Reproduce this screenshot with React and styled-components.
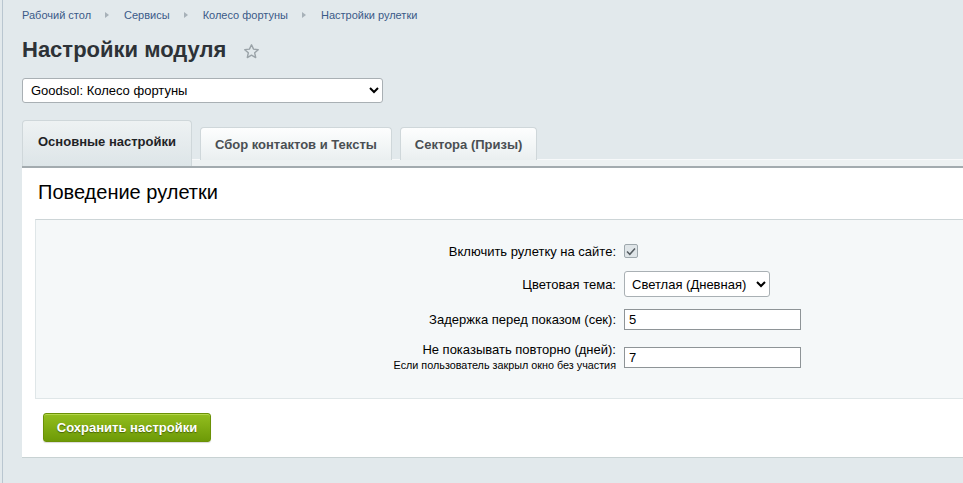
import React from "react";
import styled, { createGlobalStyle } from "styled-components";

const Global = createGlobalStyle`
  html, body { margin: 0; padding: 0; overflow: hidden; }
  body {
    background: #e2e9ec;
    font-family: "Liberation Sans", Arial, sans-serif;
    color: #000;
  }
`;

const Page = styled.div`
  margin-left: 2px;
  border-left: 1px solid #b9c6d0;
  min-height: 483px;
  padding: 8px 0 0 19px;
  width: 1200px;
  box-sizing: border-box;
`;

const Crumbs = styled.nav`
  display: flex;
  align-items: center;
  height: 14px;
  font-size: 11px;
  color: #3a5a88;
`;

const Crumb = styled.span`
  white-space: nowrap;
`;

const Arrow = styled.span`
  width: 0;
  height: 0;
  border-top: 3px solid transparent;
  border-bottom: 3px solid transparent;
  border-left: 4px solid #a7b1b8;
  margin: 0 15px 0 14px;
`;

const TitleRow = styled.div`
  display: flex;
  align-items: center;
  margin-top: 15px;
  height: 26px;
`;

const Title = styled.h1`
  margin: 0;
  font-size: 22px;
  font-weight: bold;
  color: #2d3237;
`;

const Star = styled.svg`
  margin-left: 17px;
  margin-top: 2px;
`;

const ModuleSelect = styled.select`
  display: block;
  margin-top: 15px;
  width: 361px;
  height: 25px;
  border: 1px solid #a9b0b4;
  border-radius: 3px;
  background: #fff;
  font-family: "Liberation Sans", Arial, sans-serif;
  font-size: 13px;
  color: #000;
  padding: 0 4px;
`;

const Tabs = styled.div`
  display: flex;
  align-items: flex-end;
  gap: 8px;
  margin-top: 17px;
  height: 46px;
  border-bottom: 2px solid #a3abaf;
  box-shadow: inset 0 -6px 0 #edf1f2, inset 0 -7px 0 #f7f9fa;
`;

const Tab = styled.div`
  box-sizing: border-box;
  height: ${(p) => (p.$active ? "46px" : "33px")};
  margin-bottom: ${(p) => (p.$active ? "0" : "6px")};
  padding: 0 ${(p) => (p.$active ? "15px" : "14px")};
  padding-bottom: ${(p) => (p.$active ? "4px" : "0")};
  display: flex;
  align-items: center;
  font-size: 13px;
  font-weight: bold;
  color: ${(p) => (p.$active ? "#1f2326" : "#4a4f53")};
  border: 1px solid #cfd7da;
  border-bottom: none;
  border-radius: 4px 4px 0 0;
  background: ${(p) =>
    p.$active
      ? "linear-gradient(#eef2f3, #dde5e8)"
      : "linear-gradient(#fdfefe, #eaeff0)"};
  white-space: nowrap;
`;

const Card = styled.div`
  background: #fff;
  border-bottom: 1px solid #c8d2d3;
  padding: 12px 0 15px 13px;
`;

const SectionTitle = styled.h2`
  margin: 0 0 0 3px;
  font-size: 20px;
  font-weight: normal;
  color: #000;
  height: 25px;
  line-height: 25px;
`;

const FieldBox = styled.div`
  margin-top: 14px;
  background: #f5f8f9;
  border-top: 1px solid #cdd5d7;
  border-left: 1px solid #dfe6e8;
  border-bottom: 1px solid #dfe6e8;
  padding: 20px 0 25px;
  display: flex;
  flex-direction: column;
  gap: 9px;
`;

const Row = styled.div`
  display: grid;
  grid-template-columns: 588px 1fr;
  align-items: center;
  min-height: ${(p) => p.$h || 26}px;
`;

const Label = styled.div`
  text-align: right;
  padding-right: 8px;
  font-size: 13px;
  line-height: 15px;
  color: #000;
`;

const Note = styled.div`
  font-size: 10.8px;
  line-height: 13px;
  margin-top: 2px;
`;

const Check = styled.span`
  box-sizing: border-box;
  width: 14px;
  height: 14px;
  border: 1px solid #9ea8ad;
  border-radius: 2px;
  background: #dfe5e8;
  display: flex;
  align-items: center;
  justify-content: center;
`;

const ThemeSelect = styled.select`
  width: 146px;
  height: 26px;
  border: 1px solid #a9b0b4;
  border-radius: 3px;
  background: #fff;
  font-family: "Liberation Sans", Arial, sans-serif;
  font-size: 13px;
  color: #000;
  padding: 0 3px;
`;

const TextInput = styled.input`
  box-sizing: border-box;
  width: 177px;
  height: 21px;
  border: 1px solid #8e9497;
  border-radius: 0;
  background: #fff;
  font-family: "Liberation Sans", Arial, sans-serif;
  font-size: 13px;
  color: #000;
  padding: 0 4px;
`;

const Footer = styled.div`
  padding: 14px 0 0 8px;
`;

const SaveButton = styled.button`
  height: 29px;
  width: 168px;
  border: 1px solid #6b9106;
  border-radius: 3px;
  background: linear-gradient(#93be1f, #6d9a07);
  box-shadow: inset 0 1px 0 #b3d64a, 0 1px 1px rgba(0, 0, 0, 0.15);
  color: #fff;
  font-family: "Liberation Sans", Arial, sans-serif;
  font-size: 13px;
  font-weight: bold;
  text-shadow: 0 1px 1px rgba(40, 60, 0, 0.6);
  cursor: pointer;
`;

export default function App() {
  const crumbs = ["Рабочий стол", "Сервисы", "Колесо фортуны", "Настройки рулетки"];
  return (
    <Page>
      <Global />
      <Crumbs>
        {crumbs.map((c, i) => (
          <React.Fragment key={c}>
            {i > 0 && <Arrow />}
            <Crumb>{c}</Crumb>
          </React.Fragment>
        ))}
      </Crumbs>
      <TitleRow>
        <Title>Настройки модуля</Title>
        <Star width="17" height="17" viewBox="0 0 24 24" fill="none" stroke="#9aa3a8" strokeWidth="2" strokeLinejoin="round">
          <path d="M12 2.5l2.9 6.2 6.6.7-5 4.5 1.4 6.6L12 17.1l-5.9 3.4 1.4-6.6-5-4.5 6.6-.7z" />
        </Star>
      </TitleRow>
      <ModuleSelect defaultValue="goodsol">
        <option value="goodsol">Goodsol: Колесо фортуны</option>
      </ModuleSelect>
      <Tabs>
        <Tab $active>Основные настройки</Tab>
        <Tab>Сбор контактов и Тексты</Tab>
        <Tab>Сектора (Призы)</Tab>
      </Tabs>
      <Card>
        <SectionTitle>Поведение рулетки</SectionTitle>
        <FieldBox>
          <Row $h={22}>
            <Label>Включить рулетку на сайте:</Label>
            <div>
              <Check>
                <svg width="10" height="9" viewBox="0 0 10 9" fill="none">
                  <path d="M1 4.5l2.8 2.8L9 1.5" stroke="#555d62" strokeWidth="1.5" />
                </svg>
              </Check>
            </div>
          </Row>
          <Row>
            <Label>Цветовая тема:</Label>
            <div>
              <ThemeSelect defaultValue="light">
                <option value="light">Светлая (Дневная)</option>
                <option value="dark">Тёмная (Ночная)</option>
              </ThemeSelect>
            </div>
          </Row>
          <Row>
            <Label>Задержка перед показом (сек):</Label>
            <div>
              <TextInput defaultValue="5" />
            </div>
          </Row>
          <Row $h={32}>
            <Label>
              Не показывать повторно (дней):
              <Note>Если пользователь закрыл окно без участия</Note>
            </Label>
            <div>
              <TextInput defaultValue="7" />
            </div>
          </Row>
        </FieldBox>
        <Footer>
          <SaveButton>Сохранить настройки</SaveButton>
        </Footer>
      </Card>
    </Page>
  );
}
